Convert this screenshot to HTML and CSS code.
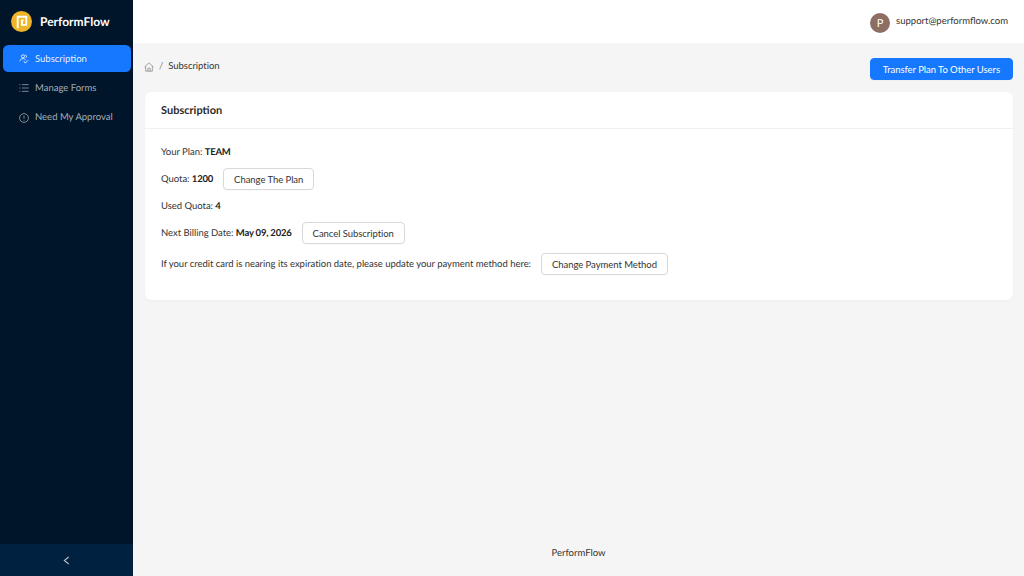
FILE: index.html
```html
<!DOCTYPE html>
<html lang="en">
<head>
<meta charset="utf-8">
<title>PerformFlow</title>
<link rel="stylesheet" href="styles.css">
</head>
<body>
<div class="layout">
  <aside class="sider">
    <div class="sider-main">
      <div class="logo">
        <svg class="logo-icon" viewBox="0 0 22 22" width="21" height="21"><circle cx="11" cy="11" r="11" fill="#f0b429"/><path d="M7 18V6h9v8.500h-4.500V9.800h1.800" fill="none" stroke="#fff" stroke-width="2"/></svg>
        <span class="logo-text">PerformFlow</span>
      </div>
      <nav class="menu">
        <a class="item active">
          <svg class="ico" viewBox="0 0 12 12" width="10" height="10" fill="none" stroke="currentColor" stroke-width="1"><circle cx="4.800" cy="2.800" r="1.900"/><path d="M1 9c.5-2.400 1.800-3.500 3.800-3.500 1.500 0 2.700.7 3.300 2"/><path d="M7.500 1c1.400.3 2 2.300.8 3.500M5.800 8.500l1.700 2.500 3.500-3.500"/></svg>
          <span>Subscription</span>
        </a>
        <a class="item">
          <svg class="ico" viewBox="0 0 12 12" width="10" height="10" fill="none" stroke="currentColor" stroke-width=".9"><path d="M3.500 2h8M3.500 6h8M3.500 10h8M.5 2h1.200M.5 6h1.200M.5 10h1.200"/></svg>
          <span>Manage Forms</span>
        </a>
        <a class="item">
          <svg class="ico" viewBox="0 0 12 12" width="10" height="10" fill="none" stroke="currentColor" stroke-width=".9"><circle cx="6" cy="6" r="5.300"/><path d="M6 3v3.800M6 8.200v1"/></svg>
          <span>Need My Approval</span>
        </a>
      </nav>
    </div>
    <div class="collapse">
      <svg viewBox="0 0 8 10" width="7" height="9" fill="none" stroke="#b8c4d2" stroke-width="1.200"><path d="M6.500 1 1.500 5l5 4"/></svg>
    </div>
  </aside>
  <div class="main">
    <header class="topbar">
      <span class="avatar">P</span>
      <span class="email">support@performflow.com</span>
    </header>
    <div class="content">
      <div class="crumb-row">
        <div class="crumbs">
          <svg viewBox="0 0 12 12" width="10" height="10" fill="none" stroke="#7a7a7a" stroke-width=".8"><path d="M.6 6 6 1l5.400 5M2 5v6h8V5M4.700 11V7.500h2.600V11"/></svg>
          <span class="sep">/</span>
          <span>Subscription</span>
        </div>
        <button class="btn primary">Transfer Plan To Other Users</button>
      </div>
      <section class="card">
        <h2 class="card-head">Subscription</h2>
        <div class="card-body">
          <div class="row"><span>Your Plan: <b>TEAM</b></span></div>
          <div class="row"><span>Quota: <b>1200</b></span><button class="btn">Change The Plan</button></div>
          <div class="row"><span>Used Quota: <b>4</b></span></div>
          <div class="row"><span>Next Billing Date: <b>May 09, 2026</b></span><button class="btn">Cancel Subscription</button></div>
          <div class="row last"><span>If your credit card is nearing its expiration date, please update your payment method here:</span><button class="btn">Change Payment Method</button></div>
        </div>
      </section>
      <footer class="footer">PerformFlow</footer>
    </div>
  </div>
</div>
</body>
</html>
```
FILE: styles.css
```css
* { box-sizing: border-box; }
html, body { margin: 0; height: 100%; }
body {
  font-family: Lato, Roboto, sans-serif;
  font-size: 9.500px;
  text-rendering: geometricPrecision;
  color: #333;
  background: #f5f5f5;
  overflow: hidden;
}
.layout { display: flex; height: 576px; }
.sider {
  width: 133px;
  flex: none;
  background: #001529;
  display: flex;
  flex-direction: column;
}
.sider-main { flex: 1; }
.logo {
  height: 43px;
  display: flex;
  align-items: center;
  gap: 8px;
  padding-left: 11px;
}
.logo-text {
  color: #fff;
  font-size: 12px;
  font-weight: 700;
}
.menu {
  display: flex;
  flex-direction: column;
  gap: 2.300px;
  padding: 2px 2px 0 3px;
}
.item {
  height: 27px;
  display: flex;
  align-items: center;
  gap: 6px;
  padding: 1px 0 0 16px;
  border-radius: 5.500px;
  color: rgba(255, 255, 255, .65);
}
.item.active { background: #1677ff; color: rgba(255,255,255,.92); }
.ico { flex: none; }
.collapse {
  height: 32px;
  background: #002140;
  display: flex;
  align-items: center;
  justify-content: center;
}
.main { flex: 1; display: flex; flex-direction: column; min-width: 0; }
.topbar {
  height: 43px;
  flex: none;
  background: #fff;
  display: flex;
  align-items: center;
  justify-content: flex-end;
  gap: 6px;
  padding-right: 16px;
}
.avatar {
  width: 20px;
  height: 20px;
  margin-top: 3px;
  border-radius: 50%;
  background: #8d6e63;
  color: #fff;
  font-size: 11px;
  display: flex;
  align-items: center;
  justify-content: center;
}
.content {
  flex: 1;
  display: flex;
  flex-direction: column;
  padding: 15px 11px 0 11px;
}
.crumb-row {
  display: flex;
  align-items: flex-start;
  justify-content: space-between;
  height: 34px;
}
.crumbs {
  display: flex;
  align-items: center;
  gap: 5px;
  height: 17px;
  letter-spacing: -.03px;
}
.sep { color: #7a7a7a; }
.btn {
  font: inherit;
  height: 22px;
  padding: 0 10px;
  background: #fff;
  color: #333;
  border: 1px solid #d9d9d9;
  border-radius: 4px;
  letter-spacing: -.05px;
  box-shadow: 0 1px 0 rgba(0, 0, 0, .02);
}
.btn.primary {
  background: #1677ff;
  border-color: #1677ff;
  color: #fff;
  padding: 0 12px;
}
.card {
  margin-left: 1px;
  background: #fff;
  border-radius: 6px;
  height: 208px;
  box-shadow: 0 1px 2px rgba(0, 0, 0, .03);
}
.card-head {
  margin: 0;
  height: 37px;
  padding: 0 16px;
  display: flex;
  align-items: center;
  font-size: 11px;
  font-weight: 700;
  color: #2b2b2b;
  border-bottom: 1px solid #f0f0f0;
}
.card-body {
  display: flex;
  flex-direction: column;
  padding: 12px 16px 0;
  gap: 5px;
}
.row {
  display: flex;
  align-items: center;
  gap: 10px;
  min-height: 22px;
  letter-spacing: -.03px;
}
.row.last { margin-top: 4px; }
.row b { font-weight: 700; color: #222; letter-spacing: -.2px; }
.row .btn { letter-spacing: -.05px; }
.footer {
  margin-top: auto;
  height: 28px;
  text-align: center;
}
```
